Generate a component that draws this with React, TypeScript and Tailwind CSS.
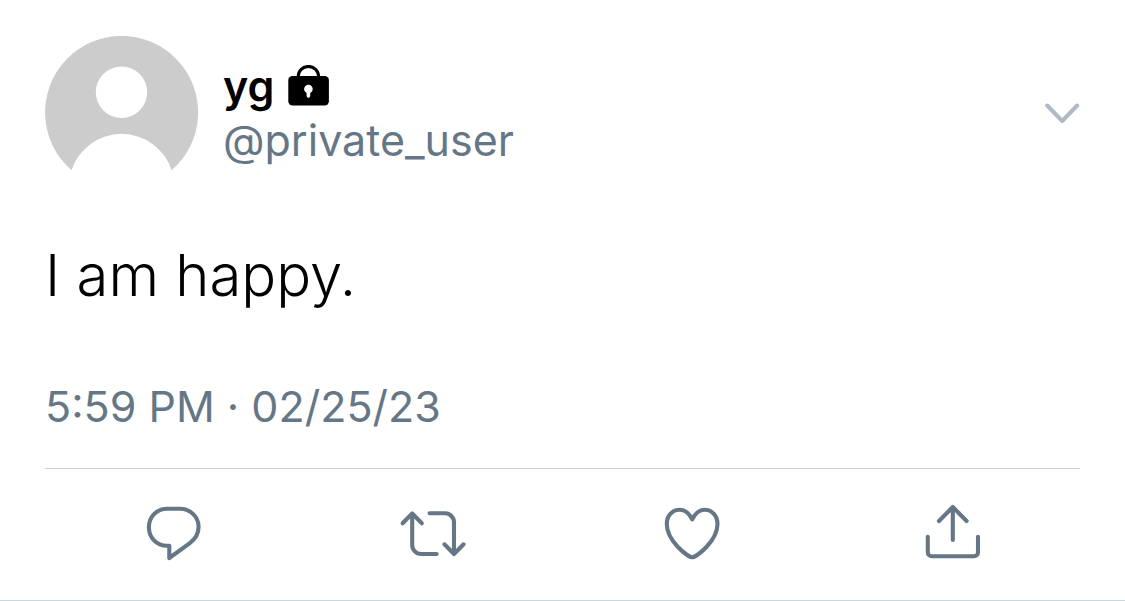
import type { ReactNode } from "react";

function Avatar() {
  return (
    <svg viewBox="0 0 153 153" className="size-[153px] shrink-0" role="img" aria-label="yg">
      <path
        fill="#cccccc"
        d="M26.6 134.3A76.5 76.5 0 1 1 126.6 134.3A52.5 52.5 0 0 0 26.6 134.3ZM102.2 56.2A25.7 25.7 0 1 0 50.8 56.2A25.7 25.7 0 1 0 102.2 56.2Z"
        fillRule="evenodd"
      />
    </svg>
  );
}

function Lock() {
  return (
    <svg viewBox="0 0 41 41" className="size-[41px]" role="img" aria-label="Protected account">
      <path d="M10.2 14V11.6a10.2 10.2 0 0 1 20.4 0V14" fill="none" stroke="#000" strokeWidth="3" />
      <rect x="0.3" y="11" width="40.6" height="29.5" rx="4.2" />
      <circle cx="20.4" cy="24" r="4.3" fill="#fff" />
      <path d="M18.6 26h3.6v5a1.8 1.8 0 0 1-3.6 0z" fill="#fff" />
    </svg>
  );
}

function Action({ label, children }: { label: string; children: ReactNode }) {
  return (
    <button type="button" aria-label={label} className="cursor-pointer justify-self-center">
      <svg
        viewBox="0 0 72 72"
        className="size-[72px]"
        fill="none"
        stroke="currentColor"
        strokeWidth="4.1"
        strokeLinecap="round"
        strokeLinejoin="round"
        aria-hidden="true"
      >
        {children}
      </svg>
    </button>
  );
}

export default function App() {
  return (
    <article className="border-b border-[#ccd6dd] bg-white px-[45px] pt-9 pb-[31px] font-['Inter',sans-serif] text-[#657786]">
      <header className="flex items-center">
        <Avatar />
        <div className="ml-[25px] flex-1 text-[43px] leading-[54px]">
          <div className="flex items-center gap-[14px] font-semibold text-black">
            <span>yg</span>
            <Lock />
          </div>
          <a href="#profile" className="block">@private_user</a>
        </div>
        <button type="button" aria-label="More" className="cursor-pointer">
          <svg
            viewBox="0 0 36 24"
            className="h-6 w-9"
            fill="none"
            stroke="#b0bac4"
            strokeWidth="4"
            strokeLinecap="round"
            strokeLinejoin="round"
            aria-hidden="true"
          >
            <path d="M3.2 4.5L18.2 20L33.2 4.5" />
          </svg>
        </button>
      </header>
      <p className="mt-[50px] text-[58px] leading-[72px] font-light text-black">I am happy.</p>
      <time dateTime="2023-02-25T17:59" className="mt-[69px] block text-[43px] leading-[52px]">
        5:59 PM · 02/25/23
      </time>
      <div className="mt-9 grid grid-cols-4 border-t border-[#ccd1d6] pt-7">
        <Action label="Reply">
          <path d="M29 11.7H42C52.5 11.7 60.6 20 60.6 30C60.6 37 57 42.3 51.5 46.3L31.3 61V48.7H29C18.5 48.7 10.9 40.5 10.9 30.2C10.9 20 18.5 11.7 29 11.7Z" />
        </Action>
        <Action label="Retweet">
          <path d="M5.6 26.3L15.2 16.5L24.8 26.3M15.2 16.5V48a9 9 0 0 0 9 9H39.6" />
          <path d="M32.6 16.3H48a9 9 0 0 1 9 9V57M47.4 47.3L57 57L66.6 47.3" />
        </Action>
        <Action label="Like">
          <path d="M36.2 22.3C33 16 28.5 12.8 23.6 12.8C16 12.8 10.8 19 10.8 27C10.8 44 32 60.3 36.2 60.3C40.4 60.3 61.5 44 61.5 27C61.5 19 56 12.8 48.8 12.8C44 12.8 39.4 16 36.2 22.3Z" />
        </Action>
        <Action label="Share">
          <path d="M37.8 43V10M24 24L37.8 10L51.6 24M12.8 39.7V55.3a4 4 0 0 0 4 4H59a4 4 0 0 0 4-4V39.7" />
        </Action>
      </div>
    </article>
  );
}
